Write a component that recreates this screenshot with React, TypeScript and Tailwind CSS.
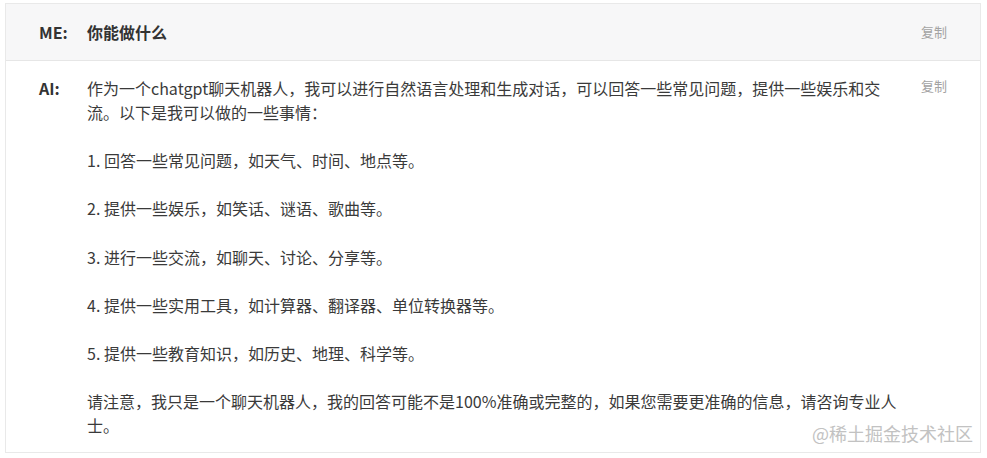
const FONT = { fontFamily: '"Noto Sans CJK SC", "Noto Sans", sans-serif' };

const answer: string[] = [
  '作为一个chatgpt聊天机器人，我可以进行自然语言处理和生成对话，可以回答一些常见问题，提供一些娱乐和交',
  '流。以下是我可以做的一些事情：',
  '',
  '1. 回答一些常见问题，如天气、时间、地点等。',
  '',
  '2. 提供一些娱乐，如笑话、谜语、歌曲等。',
  '',
  '3. 进行一些交流，如聊天、讨论、分享等。',
  '',
  '4. 提供一些实用工具，如计算器、翻译器、单位转换器等。',
  '',
  '5. 提供一些教育知识，如历史、地理、科学等。',
  '',
  '请注意，我只是一个聊天机器人，我的回答可能不是100%准确或完整的，如果您需要更准确的信息，请咨询专业人',
  '士。',
];

function CopyBtn() {
  return <span className="shrink-0 text-[13px] leading-[20px] text-[#a3a3a3] cursor-pointer">复制</span>;
}

export default function App() {
  return (
    <div className="w-[987px] h-[458px] bg-white pt-[3px] pl-[5px]" style={FONT}>
      <div className="relative w-[976px] border border-[#e9e9e9] text-[#333]">
        {/* question row */}
        <div className="h-[57px] flex items-center px-[33px] bg-[#f7f7f8] border-b border-[#e6e6e6]">
          <span className="w-[48px] shrink-0 text-[16px] font-bold">ME:</span>
          <span className="flex-1 text-[16px] font-bold">你能做什么</span>
          <CopyBtn />
        </div>

        {/* answer row */}
        <div className="flex items-start px-[33px] pt-[15px] pb-[15px]">
          <span className="w-[48px] shrink-0 text-[16px] leading-[24px] font-bold">AI:</span>
          <div className="flex-1 text-[16px] leading-[24.1px] text-[#3a3a3a]">
            {answer.map((line, i) => (
              <div key={i} className="whitespace-nowrap h-[24.1px]">
                {line}
              </div>
            ))}
          </div>
          <CopyBtn />
        </div>

        {/* watermark */}
        <div className="absolute right-[7px] bottom-[8px] text-[18px] leading-[22px] text-[#c2c2c2] pointer-events-none">
          @稀土掘金技术社区
        </div>
      </div>
    </div>
  );
}
